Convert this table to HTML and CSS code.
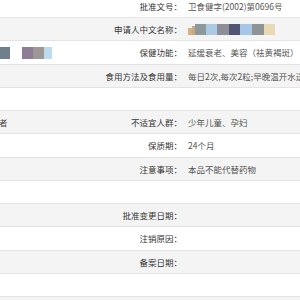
FILE: index.html
```html
<!DOCTYPE html>
<html lang="zh">
<head>
<meta charset="utf-8">
<link rel="stylesheet" href="styles.css">
</head>
<body>
<div class="frame">
<div class="table">
  <div class="row">
    <div class="lv"></div>
    <div class="lb">批准文号：</div>
    <div class="val">卫食健字(2002)第0696号</div>
  </div>
  <div class="row alt">
    <div class="lv"></div>
    <div class="lb">申请人中文名称：</div>
    <div class="val">
      <span class="mosaic">
        <i class="m m1"></i><i class="m m2"></i><i class="m m3"></i><i class="m m4"></i><i class="m m5"></i><i class="m m6"></i><i class="m m7"></i><i class="m m8"></i><i class="m m9"></i>
      </span>
    </div>
  </div>
  <div class="row">
    <div class="lv">
      <span class="mosaic left">
        <i class="m l1"></i><i class="gap"></i><i class="m l2"></i><i class="m l3"></i><i class="m l4"></i>
      </span>
    </div>
    <div class="lb">保健功能：</div>
    <div class="val">延缓衰老、美容（祛黄褐斑）</div>
  </div>
  <div class="row alt">
    <div class="lv"></div>
    <div class="lb">食用方法及食用量：</div>
    <div class="val">每日2次,每次2粒;早晚温开水送服</div>
  </div>
  <div class="row">
    <div class="lv"></div>
    <div class="lb"></div>
    <div class="val"></div>
  </div>
  <div class="row alt">
    <div class="lv"><span class="cut">黄褐斑者</span></div>
    <div class="lb">不适宜人群：</div>
    <div class="val">少年儿童、孕妇</div>
  </div>
  <div class="row">
    <div class="lv"></div>
    <div class="lb">保质期：</div>
    <div class="val">24个月</div>
  </div>
  <div class="row alt">
    <div class="lv"></div>
    <div class="lb">注意事项：</div>
    <div class="val">本品不能代替药物</div>
  </div>
  <div class="row">
    <div class="lv"></div>
    <div class="lb"></div>
    <div class="val"></div>
  </div>
  <div class="row alt">
    <div class="lv"></div>
    <div class="lb">批准变更日期：</div>
    <div class="val"></div>
  </div>
  <div class="row">
    <div class="lv"></div>
    <div class="lb">注销原因：</div>
    <div class="val"></div>
  </div>
  <div class="row alt">
    <div class="lv"></div>
    <div class="lb">备案日期：</div>
    <div class="val"></div>
  </div>
  <div class="row">
    <div class="lv"></div>
    <div class="lb"></div>
    <div class="val"></div>
  </div>
  <div class="row alt">
    <div class="lv"></div>
    <div class="lb"></div>
    <div class="val"></div>
  </div>
</div>
</div>
</body>
</html>
```

FILE: styles.css
```css
html, body {
  margin: 0;
  padding: 0;
  background: #fff;
}
body {
  font-family: "Noto Sans CJK SC", "Microsoft YaHei", sans-serif;
  font-size: 8.5px;
  color: #333;
}
.frame {
  width: 300px;
  height: 300px;
  overflow: hidden;
}
.table {
  margin-top: -5.25px;
  width: 300px;
}
.row {
  display: flex;
  align-items: center;
  height: 23.25px;
  box-sizing: border-box;
  border-bottom: 1px solid #e4e4e4;
  background: #fff;
}
.row.alt {
  background: #f4f4f4;
}
.lv {
  width: 100px;
  flex: none;
  overflow: hidden;
  white-space: nowrap;
  display: flex;
  align-items: center;
}
.lb {
  width: 82px;
  flex: none;
  text-align: right;
  color: #333;
  white-space: nowrap;
}
.val {
  flex: 1;
  padding-left: 6px;
  color: #555;
  white-space: nowrap;
  overflow: hidden;
}
.cut {
  margin-left: -26.5px;
  color: #444;
}
.mosaic {
  display: flex;
  align-items: flex-end;
  height: 11px;
  padding-top: 1px;
}
.m {
  display: block;
  height: 11px;
}
.m1 { width: 4px; height: 7px; background: #d2b183; }
.m2 { width: 3px; height: 9px; background: #c8aa84; }
.m3 { width: 11px; background: #8d979e; }
.m4 { width: 11px; background: #aacbe3; }
.m5 { width: 12px; background: #8e8e96; }
.m6 { width: 11px; background: #535574; }
.m7 { width: 12px; background: #a5c6e6; }
.m8 { width: 12px; background: #8e9393; }
.m9 { width: 11px; background: #e9dab4; }
.mosaic.left {
  height: 12px;
  margin-top: 1px;
}
.gap { display: block; width: 12px; }
.l1 { width: 10px; height: 12px; background: #6f7f8b; }
.l2 { width: 11px; height: 12px; background: #8c7d92; }
.l3 { width: 11px; height: 12px; background: #9b9896; }
.l4 { width: 8px; height: 12px; background: #bcdbf1; }
```
